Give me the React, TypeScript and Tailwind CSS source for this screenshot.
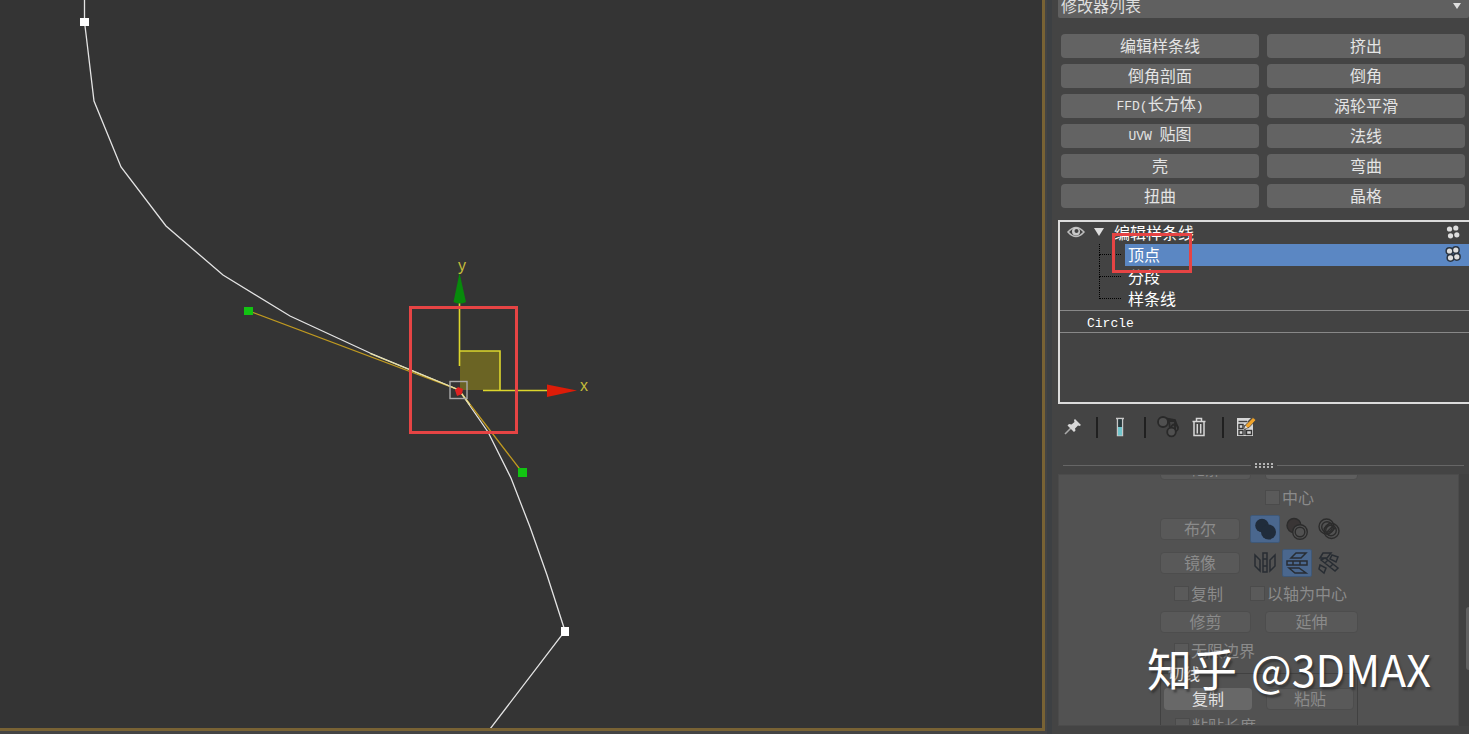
import React from 'react';

const modifiers = [
  ['编辑样条线', '挤出'],
  ['倒角剖面', '倒角'],
  ['FFD(长方体)', '涡轮平滑'],
  ['UVW 贴图', '法线'],
  ['壳', '弯曲'],
  ['扭曲', '晶格'],
];

const subObjects = ['顶点', '分段', '样条线'];

// Latin characters are set smaller so that they take half of a CJK cell
const Label: React.FC<{ text: string }> = ({ text }) => (
  <span className="whitespace-pre">
    {text.split(/([A-Za-z() ]+)/).filter(Boolean).map((part, i) =>
      /[A-Za-z()]/.test(part) ? (
        <span key={i} className="font-['Liberation_Mono',monospace] text-[13px]">{part}</span>
      ) : (
        <span key={i}>{part}</span>
      )
    )}
  </span>
);

const Dots: React.FC<{ outlined?: boolean }> = ({ outlined }) => (
  <svg width="18" height="18" viewBox="0 0 18 18" className="shrink-0">
    {outlined && (
      <g fill="#2b3440" stroke="#2b3440" strokeWidth="3">
        <circle cx="5.5" cy="6" r="2.6" />
        <circle cx="11.8" cy="5" r="2.6" />
        <circle cx="6.5" cy="12.8" r="2.6" />
        <circle cx="12.8" cy="11.8" r="2.6" />
      </g>
    )}
    <g fill="#dedede">
      <circle cx="5.5" cy="6" r="2.6" />
      <circle cx="11.8" cy="5" r="2.6" />
      <circle cx="6.5" cy="12.8" r="2.6" />
      <circle cx="12.8" cy="11.8" r="2.6" />
    </g>
  </svg>
);

const Viewport: React.FC = () => (
  <section aria-label="Viewport" className="flex-1 min-w-0 mb-[3px] bg-[#343434] border-r-[3px] border-b-[3px] border-[#786234] overflow-hidden">
    <svg width="100%" height="100%" className="block">
      {/* Spline */}
      <polyline
        points="84.5,0 84.5,22 86,34 94,101 121,167 166,226 223,275 290,316 370,353 459,390 488,432 511,478 530,527 547,575 565,631 490,729"
        fill="none"
        stroke="#e4e4e4"
        strokeWidth="1.3"
      />
      {/* Tangent handles */}
      <path d="M249 311L459 390L522 472" fill="none" stroke="#c09a20" strokeWidth="1.3" />
      <path d="M370 353.500L459 390L470 405" fill="none" stroke="#e8e0a0" strokeWidth="1.3" />
      <rect x="244" y="307" width="9" height="8" fill="#12c312" />
      <rect x="518" y="468" width="9" height="9" fill="#12c312" />
      <rect x="80" y="18" width="9" height="8" fill="#fff" />
      <rect x="561" y="627" width="8" height="9" fill="#fff" />
      {/* Move gizmo */}
      <rect x="460" y="351" width="40" height="39" fill="#6b6424" />
      <path d="M459.5 366V302M459.5 351H500V390M483 390.5H548" fill="none" stroke="#dcd62c" strokeWidth="1.6" />
      <path d="M459.5 273L453.5 302Q460 305 466 302Z" fill="#078a0b" />
      <path d="M577 390.5L547 384.5V397Z" fill="#dd1c08" />
      <path d="M455 390l3-3 5 2-1 5-5 2z" fill="#e02222" />
      <rect x="450" y="381.5" width="17" height="17" fill="none" stroke="#a9a9a9" strokeWidth="1.4" />
      <text x="458" y="271" fill="#c4bc3a" className="font-['Liberation_Sans',sans-serif] text-[16px]">y</text>
      <text x="580" y="391" fill="#c4bc3a" className="font-['Liberation_Sans',sans-serif] text-[16px]">x</text>
      {/* Highlight frame */}
      <rect x="410.5" y="307.5" width="106" height="125" fill="none" stroke="#e64444" strokeWidth="3" />
    </svg>
  </section>
);

const ModifierStack: React.FC = () => (
  <div className="ml-px mt-3 h-[184px] shrink-0 border-2 border-r-0 border-[#dcdcdc] bg-[#434343] text-white">
    <div className="relative h-[22px] flex items-center px-[7px] pb-[2px]">
      <svg width="18" height="14" viewBox="0 0 18 14" className="shrink-0">
        <path d="M1 7Q9-2 17 7Q9 16 1 7Z" fill="none" stroke="#bdbdbd" strokeWidth="1.5" />
        <circle cx="9" cy="6.5" r="4" fill="#c9c9c9" />
        <circle cx="9.5" cy="6" r="2" fill="#434343" />
      </svg>
      <svg width="10" height="8" viewBox="0 0 10 8" className="ml-[9px] shrink-0">
        <path d="M0 0H10L5 8Z" fill="#dedede" />
      </svg>
      <span className="ml-[10px] flex-1">编辑样条线</span>
      <Dots />
      <div className="absolute left-[52px] top-[11px] z-10 w-[80px] h-[40px] border-[3px] border-[#e64444]"></div>
    </div>
    <ul>
      {subObjects.map((name, i) => (
        <li key={name} className="h-[22px] flex pl-[39px]">
          <span className="w-[22px] mr-1 shrink-0 flex flex-col">
            <span className="h-[11px] border-l border-b border-dotted border-black"></span>
            {i < subObjects.length - 1 && <span className="h-[11px] border-l border-dotted border-black"></span>}
          </span>
          <span className={i === 0 ? 'flex-1 flex items-center justify-between pl-[3px] pr-[7px] pb-[2px] bg-[#5b87c3]' : 'flex-1 flex items-center pl-[3px] pb-[2px]'}>
            {name}
            {i === 0 && <Dots outlined />}
          </span>
        </li>
      ))}
    </ul>
    <div className="h-[23px] flex items-center pl-[27px] border-y border-[#888888]">
      <Label text="Circle" />
    </div>
  </div>
);

const Separator: React.FC = () => <span className="w-[2px] h-[21px] bg-[#202020]"></span>;

const StackToolbar: React.FC = () => (
  <div className="h-[46px] shrink-0 flex items-center pl-[6px]">
    <button aria-label="Pin stack" className="w-5 h-5">
      <svg width="20" height="20" viewBox="0 0 20 20">
        <path d="M2 17L9 10" stroke="#aaa" strokeWidth="1.6" />
        <path d="M12 2L18 8L16.500 9L15 8.500L12 11.500L12.500 13.500L11 15L4.500 8.500L6 7L8.500 7.500L11.500 5L11 3Z" fill="#dadada" />
      </svg>
    </button>
    <span className="ml-[13px] flex"><Separator /></span>
    <button aria-label="Show end result" className="ml-3 w-5 h-5">
      <svg width="20" height="20" viewBox="0 0 20 20">
        <path d="M6 1.500H14M7.500 2V18.500H12.500V2" fill="none" stroke="#c8c8c8" strokeWidth="1.400" />
        <rect x="8.300" y="2.300" width="3.500" height="8" fill="#273a3e" />
        <rect x="8" y="10" width="4" height="8.500" fill="#70c5cc" />
      </svg>
    </button>
    <span className="ml-[14px] flex"><Separator /></span>
    <button aria-label="Make unique" disabled className="ml-[11px] w-6 h-6">
      <svg width="24" height="24" viewBox="0 0 24 24" fill="#505050" stroke="#292929" strokeWidth="1.8">
        <path d="M9 3.500L18 5L21 13" fill="none" />
        <path d="M12 6H18V14H13Z" fill="none" />
        <circle cx="17.500" cy="13" r="3.500" fill="none" />
        <circle cx="14.500" cy="17" r="4.300" />
        <circle cx="6" cy="7" r="5" />
      </svg>
    </button>
    <button aria-label="Remove modifier" className="ml-2 w-5 h-5">
      <svg width="20" height="20" viewBox="0 0 20 20" fill="none" stroke="#d6d6d6" strokeWidth="1.5">
        <path d="M3.500 4.500H16.500M7.500 4V1.500H12.500V4M5 5V18.500H15V5M8.300 7V16.500M11.700 7V16.500" />
      </svg>
    </button>
    <span className="ml-[13px] flex"><Separator /></span>
    <button aria-label="Configure modifier sets" className="ml-[11px] w-[22px] h-[22px]">
      <svg width="22" height="22" viewBox="0 0 22 22">
        <path d="M2 2H16L12 6H18V20H2Z" fill="#d7d7d7" />
        <path d="M3.500 5.500H12" stroke="#434343" strokeWidth="1.4" />
        <g fill="#d7d7d7" stroke="#353535" strokeWidth="1.4">
          <rect x="4" y="8.500" width="4" height="4" />
          <rect x="4" y="14.500" width="4" height="4" />
          <rect x="11.500" y="14.500" width="5" height="4" />
          <path d="M10 9V19" />
        </g>
        <path d="M9 13L11 8.500L18 1.500L21 4L14 11.500Z" fill="#f0a32a" stroke="#434343" strokeWidth="0.8" />
        <path d="M9 13L10.500 9.500L12.500 11.800Z" fill="#ddd" />
      </svg>
    </button>
  </div>
);

const BooleanIcon: React.FC<{ kind: number }> = ({ kind }) => (
  <svg width="24" height="24" viewBox="0 0 24 24" strokeWidth="1.4">
    {kind === 0 && (
      <g fill="#202c3b">
        <circle cx="9" cy="8.500" r="6.800" />
        <circle cx="15.500" cy="15" r="7.500" />
      </g>
    )}
    {kind === 1 && (
      <g stroke="#2c2c2c">
        <circle cx="9" cy="8.500" r="7" fill="#393535" />
        <circle cx="15" cy="15" r="7.300" fill="#525252" />
        <circle cx="15" cy="15" r="4.800" fill="none" />
      </g>
    )}
    {kind === 2 && (
      <g stroke="#2c2c2c" fill="none">
        <circle cx="9.500" cy="9.500" r="7.500" />
        <circle cx="10" cy="10" r="5.300" />
        <circle cx="14.500" cy="14" r="7.500" />
        <circle cx="14" cy="13.500" r="5.300" />
        <path d="M10 15L16 9M11 18L18 11M7 12L12 7" />
      </g>
    )}
  </svg>
);

const MirrorIcon: React.FC<{ kind: number }> = ({ kind }) => (
  <svg width="24" height="24" viewBox="0 0 24 24" fill="none" stroke="#282d33" strokeWidth="1.5">
    {kind === 0 && (
      <path d="M2 4L7 9V20L2 15ZM22 4L17 9V20L22 15ZM10 2H14V21H10ZM10 8H14M10 15H14" />
    )}
    {kind === 1 && (
      <path d="M6 7L11 2H21L16 7ZM2 10H22V14H2ZM8 10V14M15 10V14M4 17H14L21 22H10Z" />
    )}
    {kind === 2 && (
      <path d="M3 7L6 2H14L10 7ZM4 9L8 7L21 17L18 20ZM8 12L11 9M13 16L16 13M3 14L9 17L7 22L2 18ZM15 4L21 6L19 11L13 8Z" />
    )}
  </svg>
);

const iconCell = 'w-[30px] h-[28px] flex items-center justify-center rounded-xs';
const iconCellOn = 'w-[30px] h-[28px] flex items-center justify-center rounded-xs bg-[#4a678e] border border-[#3f5877]';
const dimButton = 'h-[22px] pb-[2px] flex items-center justify-center rounded-sm bg-[#595959] border border-[#4d4d4d] text-[#8b8b8b]';

const DimCheck: React.FC<{ text: string }> = ({ text }) => (
  <label className="h-6 flex items-center gap-[2px] text-[#8b8b8b]">
    <input type="checkbox" disabled className="appearance-none w-[15px] h-[15px] bg-[#5a5a5a] border border-[#4b4b4b]" />
    {text}
  </label>
);

const GeometryRollout: React.FC = () => (
  <div className="flex-1 min-h-0 mb-2 flex justify-between">
    <div className="flex-1 ml-px bg-[#525252] border border-[#4b4b4b] overflow-hidden">
      <div className="ml-[101px] w-[198px]">
        <div className="flex gap-[14px] h-[5px] items-end overflow-hidden">
          <button disabled className={`${dimButton} w-[91px] shrink-0`}>轮廓</button>
          <select disabled aria-label="轮廓" className="appearance-none h-[22px] w-[93px] shrink-0 rounded-sm bg-[#5e5e5e] border border-[#4d4d4d]"></select>
        </div>
        <div className="mt-[5px] pl-[105px]"><DimCheck text="中心" /></div>
        <div className="mt-[6px] flex items-center gap-[2px]">
          <button disabled className={`${dimButton} w-[80px] mr-2`}>布尔</button>
          {[0, 1, 2].map((kind) => (
            <button key={kind} disabled aria-label={['并集', '差集', '交集'][kind]} className={kind === 0 ? iconCellOn : iconCell}>
              <BooleanIcon kind={kind} />
            </button>
          ))}
        </div>
        <div className="mt-[6px] flex items-center gap-[2px]">
          <button disabled className={`${dimButton} w-[80px] mr-2`}>镜像</button>
          {[0, 1, 2].map((kind) => (
            <button key={kind} disabled aria-label={['水平镜像', '垂直镜像', '双向镜像'][kind]} className={kind === 1 ? iconCellOn : iconCell}>
              <MirrorIcon kind={kind} />
            </button>
          ))}
        </div>
        <div className="mt-1 pl-[14px] flex gap-[27px]">
          <DimCheck text="复制" />
          <DimCheck text="以轴为中心" />
        </div>
        <div className="mt-[6px] flex gap-[14px]">
          <button disabled className={`${dimButton} w-[91px]`}>修剪</button>
          <button disabled className={`${dimButton} w-[93px]`}>延伸</button>
        </div>
        <div className="mt-[5px] pl-[14px]"><DimCheck text="无限边界" /></div>
        <fieldset className="w-[198px] h-20 border border-[#414141] px-[3px]">
          <legend className="ml-1 h-[22px] flex items-center text-[#e2e2e2]">切线</legend>
          <div className="mt-1 flex gap-[14px]">
            <button className="w-[88px] h-[22px] pb-[2px] flex items-center justify-center rounded-sm bg-[#686868] text-[#e2e2e2]">复制</button>
            <button disabled className={`${dimButton} w-[88px]`}>粘贴</button>
          </div>
          <div className="mt-[3px] pl-[11px]"><DimCheck text="粘贴长度" /></div>
        </fieldset>
      </div>
    </div>
    {/* Scrollbar */}
    <div className="w-[10px] pl-[7px] pt-[133px] bg-[#414141]">
      <div className="h-[63px] bg-[#606060] rounded-l-sm"></div>
    </div>
  </div>
);

const App: React.FC = () => {
  return (
    <main className="relative h-screen flex overflow-hidden bg-[#444444] font-['Noto_Sans_CJK_SC',sans-serif] text-[16px] leading-[22px]">
      <Viewport />
      <div className="w-[5px] ml-[2px] bg-[#3d4043]"></div>

      {/* Modify panel */}
      <aside className="w-[417px] pl-[5px] shrink-0 flex flex-col">
        <div className="relative h-[18px] shrink-0 ml-px flex items-end overflow-hidden rounded-b-xs">
          <select aria-label="修改器列表" className="appearance-none w-full h-[25px] shrink-0 pl-[3px] bg-[#606060] text-[#dddddd] leading-[25px]">
            <option>修改器列表</option>
          </select>
          <svg width="8" height="6" viewBox="0 0 8 6" className="absolute right-2 top-[3px] pointer-events-none">
            <path d="M0 0H8L4 6Z" fill="#dedede" />
          </svg>
        </div>

        <div className="mt-4 px-1 grid grid-cols-2 gap-x-2 gap-y-[6px] shrink-0">
          {modifiers.flat().map((name) => (
            <button key={name} className="h-6 pb-[2px] flex items-center justify-center rounded-sm bg-[#636363] text-[#e4e4e4]">
              <Label text={name} />
            </button>
          ))}
        </div>

        <ModifierStack />
        <StackToolbar />

        {/* Splitter */}
        <div className="mt-[11px] mb-[5px] h-2 shrink-0 flex items-center gap-1 pl-[6px] pr-[5px]">
          <span className="flex-1 h-px bg-[#666666]"></span>
          <span className="w-[18px] h-[5px] flex flex-col justify-between">
            <span className="border-t-2 border-dotted border-[#b5b5b5]"></span>
            <span className="border-t-2 border-dotted border-[#b5b5b5]"></span>
          </span>
          <span className="flex-1 h-px bg-[#666666]"></span>
        </div>

        <GeometryRollout />
      </aside>

      {/* Watermark */}
      <p className="absolute right-[38px] bottom-9 flex items-baseline gap-[14px] text-[45px] leading-[60px] text-white whitespace-nowrap [text-shadow:2px_3px_2px_#2228] pointer-events-none">
        <span>知乎</span>
        <span className="text-[43px]">@3DMAX</span>
      </p>
    </main>
  );
};

export default App;
